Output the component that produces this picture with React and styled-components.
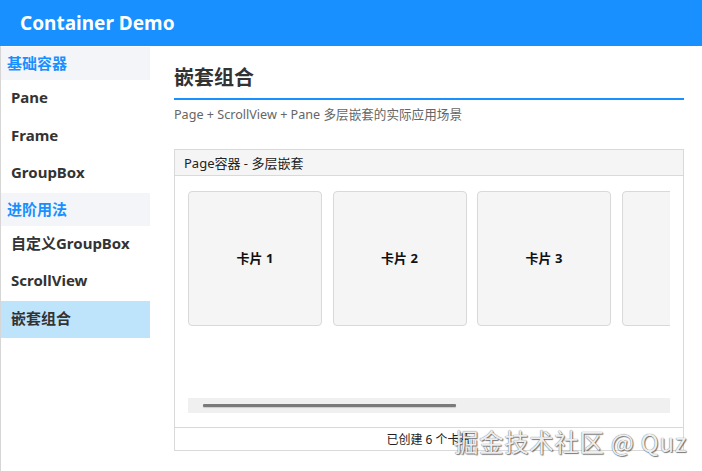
import styled, { createGlobalStyle } from "styled-components";

const GlobalStyle = createGlobalStyle`
  html, body {
    margin: 0;
    padding: 0;
    background: #ffffff;
    overflow: hidden;
  }
  body {
    font-family: "Noto Sans", "Noto Sans CJK SC", sans-serif;
  }
  * {
    box-sizing: border-box;
  }
`;

const menu = [
  { type: "group", label: "基础容器" },
  { type: "item", label: "Pane" },
  { type: "item", label: "Frame" },
  { type: "item", label: "GroupBox" },
  { type: "group", label: "进阶用法" },
  { type: "item", label: "自定义GroupBox" },
  { type: "item", label: "ScrollView" },
  { type: "item", label: "嵌套组合", active: true },
];

const cards = ["卡片 1", "卡片 2", "卡片 3", "卡片 4", "卡片 5", "卡片 6"];

function App() {
  return (
    <Window>
      <GlobalStyle />
      <TitleBar>Container Demo</TitleBar>
      <Body>
        <Sidebar>
          {menu.map((m) =>
            m.type === "group" ? (
              <GroupLabel key={m.label}>{m.label}</GroupLabel>
            ) : (
              <NavItem key={m.label} $active={m.active}>
                {m.label}
              </NavItem>
            )
          )}
        </Sidebar>
        <Main>
          <PageTitle>嵌套组合</PageTitle>
          <Subtitle>Page + ScrollView + Pane 多层嵌套的实际应用场景</Subtitle>
          <Panel>
            <PanelHeader>Page容器 - 多层嵌套</PanelHeader>
            <PanelBody>
              <Viewport>
                <CardRow>
                  {cards.map((c) => (
                    <Card key={c}>{c}</Card>
                  ))}
                </CardRow>
              </Viewport>
              <ScrollTrack>
                <ScrollThumb />
              </ScrollTrack>
            </PanelBody>
            <PanelFooter>已创建 6 个卡片</PanelFooter>
          </Panel>
        </Main>
      </Body>
      <Watermark>掘金技术社区 @ Quz</Watermark>
    </Window>
  );
}

const Window = styled.div`
  position: relative;
  width: 702px;
  height: 471px;
  display: flex;
  flex-direction: column;
  overflow: hidden;
`;

const TitleBar = styled.div`
  height: 46px;
  flex-shrink: 0;
  background: #1890ff;
  color: #ffffff;
  font-size: 19px;
  font-weight: 700;
  padding-left: 20px;
  display: flex;
  align-items: center;
  padding-bottom: 1px;
`;

const Body = styled.div`
  flex: 1;
  display: flex;
  min-height: 0;
`;

const Sidebar = styled.div`
  width: 150px;
  flex-shrink: 0;
  border-left: 1px solid #d6d6d6;
  padding-top: 1px;
  display: flex;
  flex-direction: column;
`;

const GroupLabel = styled.div`
  height: 33px;
  background: #f3f5f9;
  color: #1890ff;
  font-size: 15px;
  font-weight: 700;
  padding-left: 6px;
  display: flex;
  align-items: center;
  padding-bottom: 2px;
`;

const NavItem = styled.div`
  height: 37.5px;
  background: ${(p) => (p.$active ? "#bee4fb" : "transparent")};
  color: #333333;
  font-size: 15px;
  font-weight: 700;
  padding-left: 10px;
  padding-bottom: 3px;
  display: flex;
  align-items: center;
`;

const Main = styled.div`
  flex: 1;
  min-width: 0;
  padding: 0 18px 0 24px;
  display: flex;
  flex-direction: column;
`;

const PageTitle = styled.div`
  margin-top: 17px;
  font-size: 20px;
  font-weight: 700;
  color: #333333;
  line-height: 30px;
  padding-bottom: 5px;
  border-bottom: 2px solid #1890ff;
`;

const Subtitle = styled.div`
  margin-top: 6px;
  font-size: 12.6px;
  color: #666666;
  line-height: 18px;
`;

const Panel = styled.div`
  margin-top: 25px;
  border: 1px solid #d9d9d9;
  display: flex;
  flex-direction: column;
`;

const PanelHeader = styled.div`
  height: 26px;
  background: #f5f5f5;
  border-bottom: 1px solid #d9d9d9;
  font-size: 13px;
  color: #222222;
  padding-left: 9px;
  display: flex;
  align-items: center;
`;

const PanelBody = styled.div`
  padding: 14px 13px 14px 13px;
  border-bottom: 1px solid #d9d9d9;
`;

const Viewport = styled.div`
  height: 208px;
  overflow: hidden;
`;

const CardRow = styled.div`
  display: flex;
  gap: 10.5px;
  padding-top: 1px;
`;

const Card = styled.div`
  flex-shrink: 0;
  width: 134px;
  height: 135px;
  background: #f5f5f5;
  border: 1px solid #d9d9d9;
  border-radius: 4px;
  display: flex;
  align-items: center;
  justify-content: center;
  padding-bottom: 3px;
  font-size: 13px;
  font-weight: 700;
  color: #111111;
`;

const ScrollTrack = styled.div`
  height: 15px;
  background: #f0f0f0;
  display: flex;
  align-items: center;
  padding-left: 15px;
`;

const ScrollThumb = styled.div`
  width: 253px;
  height: 3px;
  background: #7a7a7a;
  border-radius: 1px;
  box-shadow: 0 1px 1px rgba(0, 0, 0, 0.15);
`;

const PanelFooter = styled.div`
  height: 22px;
  font-size: 12px;
  color: #222222;
  display: flex;
  align-items: center;
  justify-content: center;
`;

const Watermark = styled.div`
  position: absolute;
  right: 15px;
  bottom: 15px;
  font-size: 24.5px;
  line-height: 28px;
  color: rgba(255, 255, 255, 0.92);
  letter-spacing: 0.6px;
  text-shadow: 0 0 1px #444, 1px 1px 1px rgba(0, 0, 0, 0.5);
  font-family: "Noto Sans CJK SC", "Noto Sans", sans-serif;
`;

export default App;
